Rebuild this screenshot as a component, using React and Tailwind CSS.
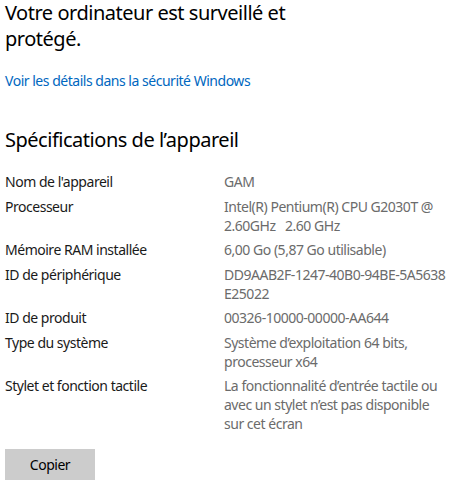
import React from 'react';

const specs = [
  { label: 'Nom de l\'appareil', value: ['GAM'] },
  { label: 'Processeur', value: ['Intel(R) Pentium(R) CPU G2030T @', '2.60GHz   2.60 GHz'] },
  { label: 'Mémoire RAM installée', value: ['6,00 Go (5,87 Go utilisable)'] },
  { label: 'ID de périphérique', value: ['DD9AAB2F-1247-40B0-94BE-5A5638', 'E25022'] },
  { label: 'ID de produit', value: ['00326-10000-00000-AA644'] },
  { label: 'Type du système', value: ['Système d\u2019exploitation 64 bits,', 'processeur x64'] },
  { label: 'Stylet et fonction tactile', value: ['La fonctionnalité d\u2019entrée tactile ou', 'avec un stylet n\u2019est pas disponible', 'sur cet écran'] },
];

const App = () => {
  return (
    <div className="w-[457px] h-[484px] bg-white overflow-hidden px-[5px] tracking-[-0.03em] font-['Segoe_UI','Noto_Sans',sans-serif]">
      <h1 className="text-[20px] leading-[26px] text-black">
        Votre ordinateur est surveillé et<br />protégé.
      </h1>

      <a href="#" className="block mt-[19px] text-[14px] leading-[19px] text-[#0067c0]">
        Voir les détails dans la sécurité Windows
      </a>

      <h2 className="mt-[36px] text-[20px] leading-[27px] text-black">
        Spécifications de l’appareil
      </h2>

      <div className="mt-[19px] flex flex-col gap-[5.5px] text-[14px] leading-[19px]">
        {specs.map((row, idx) => (
          <div key={idx} className="flex">
            <div className="w-[219px] shrink-0 text-[#1a1a1a]">{row.label}</div>
            <div className="text-[#6b6b6b] whitespace-pre">
              {row.value.map((line, i) => (
                <div key={i}>{line}</div>
              ))}
            </div>
          </div>
        ))}
      </div>

      <button className="mt-[16px] w-[90px] h-[31px] bg-[#cccccc] text-[14px] text-black">
        Copier
      </button>
    </div>
  );
};

export default App;
